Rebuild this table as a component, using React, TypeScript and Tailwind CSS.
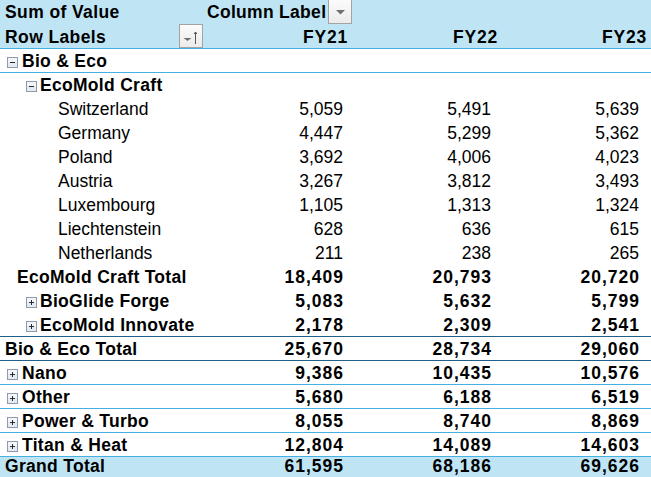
import React from "react";

type Row = {
  label: string;
  pl: string;
  icon?: "plus" | "minus";
  iconGap?: string;
  bold: boolean;
  vals?: [string, string, string];
  line?: "light" | "dark";
};

const rows: Row[] = [
  { label: "Bio & Eco", pl: "pl-[7px]", icon: "minus", iconGap: "mr-[4px]", bold: true, line: "light" },
  { label: "EcoMold Craft", pl: "pl-[26px]", icon: "minus", iconGap: "mr-[3px]", bold: true, line: "light" },
  { label: "Switzerland", pl: "pl-[58px]", bold: false, vals: ["5,059", "5,491", "5,639"] },
  { label: "Germany", pl: "pl-[58px]", bold: false, vals: ["4,447", "5,299", "5,362"] },
  { label: "Poland", pl: "pl-[58px]", bold: false, vals: ["3,692", "4,006", "4,023"] },
  { label: "Austria", pl: "pl-[58px]", bold: false, vals: ["3,267", "3,812", "3,493"] },
  { label: "Luxembourg", pl: "pl-[58px]", bold: false, vals: ["1,105", "1,313", "1,324"] },
  { label: "Liechtenstein", pl: "pl-[58px]", bold: false, vals: ["628", "636", "615"] },
  { label: "Netherlands", pl: "pl-[58px]", bold: false, vals: ["211", "238", "265"] },
  { label: "EcoMold Craft Total", pl: "pl-[17px]", bold: true, vals: ["18,409", "20,793", "20,720"] },
  { label: "BioGlide Forge", pl: "pl-[26px]", icon: "plus", iconGap: "mr-[3px]", bold: true, vals: ["5,083", "5,632", "5,799"] },
  { label: "EcoMold Innovate", pl: "pl-[26px]", icon: "plus", iconGap: "mr-[3px]", bold: true, vals: ["2,178", "2,309", "2,541"] },
  { label: "Bio & Eco Total", pl: "pl-[5px]", bold: true, vals: ["25,670", "28,734", "29,060"], line: "dark" },
  { label: "Nano", pl: "pl-[7px]", icon: "plus", iconGap: "mr-[4px]", bold: true, vals: ["9,386", "10,435", "10,576"], line: "dark" },
  { label: "Other", pl: "pl-[7px]", icon: "plus", iconGap: "mr-[4px]", bold: true, vals: ["5,680", "6,188", "6,519"], line: "light" },
  { label: "Power & Turbo", pl: "pl-[7px]", icon: "plus", iconGap: "mr-[4px]", bold: true, vals: ["8,055", "8,740", "8,869"], line: "light" },
  { label: "Titan & Heat", pl: "pl-[7px]", icon: "plus", iconGap: "mr-[4px]", bold: true, vals: ["12,804", "14,089", "14,603"], line: "light" },
];

function ToggleIcon({ kind, gap }: { kind: "plus" | "minus"; gap: string }) {
  return (
    <svg width="11" height="11" viewBox="0 0 11 11" className={`mt-[8px] shrink-0 ${gap}`}>
      <rect x="0.5" y="0.5" width="10" height="10" fill="#e6ebf2" stroke="#8d9bb1" />
      <rect x="1" y="1" width="9" height="4" fill="#f3f5f9" />
      <path d="M3 5.5h5" stroke="#2a2a2a" strokeWidth="1" />
      {kind === "plus" && <path d="M5.5 3v5" stroke="#2a2a2a" strokeWidth="1" />}
    </svg>
  );
}

function ValueCells({ vals, bold }: { vals?: [string, string, string]; bold: boolean }) {
  if (bold) {
    return (
      <>
        <div className="w-[149px] shrink-0 text-right pr-[8px] font-bold tracking-[1px]">{vals ? vals[0] : ""}</div>
        <div className="w-[148px] shrink-0 text-right pr-[8px] font-bold tracking-[1px]">{vals ? vals[1] : ""}</div>
        <div className="w-[151px] shrink-0 text-right pr-[11px] font-bold tracking-[1px]">{vals ? vals[2] : ""}</div>
      </>
    );
  }
  return (
    <>
      <div className="w-[149px] shrink-0 text-right pr-[9px]">{vals ? vals[0] : ""}</div>
      <div className="w-[148px] shrink-0 text-right pr-[9px]">{vals ? vals[1] : ""}</div>
      <div className="w-[151px] shrink-0 text-right pr-[12px]">{vals ? vals[2] : ""}</div>
    </>
  );
}

export default function App() {
  return (
    <div className="w-[651px] h-[477px] overflow-hidden bg-white text-black font-['Liberation_Sans',Arial,sans-serif] text-[17.5px]">
      {/* Header row 0 */}
      <div className="flex h-[24px] bg-[#bfe5f5] leading-[24px]">
        <div className="w-[203px] shrink-0 pl-[5px] font-bold tracking-[0.4px]">Sum of Value</div>
        <div className="w-[149px] shrink-0 flex items-start">
          <span className="pl-[4px] font-bold tracking-[0.3px] whitespace-nowrap">Column Label</span>
          <span className="ml-auto shrink-0 w-[24px] h-[24px] border-x border-b border-[#a3a3a3] bg-gradient-to-b from-[#fbfbfb] to-[#ebebeb] flex justify-center">
            <svg width="9" height="5" viewBox="0 0 9 5" className="mt-[10px]">
              <path d="M0 0h9L4.5 4.5z" fill="#6e6e6e" />
            </svg>
          </span>
        </div>
        <div className="w-[148px] shrink-0" />
        <div className="w-[151px] shrink-0" />
      </div>
      {/* Header row 1 */}
      <div className="flex h-[24px] bg-[#bfe5f5] leading-[24px] font-bold">
        <div className="w-[203px] shrink-0 flex items-start">
          <span className="pl-[5px] pt-px tracking-[0.4px]">Row Labels</span>
          <span className="ml-auto w-[24px] h-[24px] border border-[#a3a3a3] bg-gradient-to-b from-[#fbfbfb] to-[#ebebeb] relative">
            <svg width="22" height="22" viewBox="0 0 22 22" className="absolute left-0 top-0">
              <path d="M3.5 13h8l-4 3z" fill="#6e6e6e" />
              <path d="M15.5 7v12" stroke="#555" strokeWidth="1" />
              <path d="M14 9l1.5-2 1.5 2" stroke="#555" strokeWidth="1" fill="none" />
            </svg>
          </span>
        </div>
        <div className="w-[149px] shrink-0 text-right pr-[4px] pt-px tracking-[0.8px]">FY21</div>
        <div className="w-[148px] shrink-0 text-right pr-[2px] pt-px tracking-[0.8px]">FY22</div>
        <div className="w-[151px] shrink-0 text-right pr-[4px] pt-px tracking-[0.8px]">FY23</div>
      </div>
      {rows.map((r, i) => (
        <div
          key={i}
          className={`flex h-[24px] leading-[24px] pt-px ${
            r.line === "light"
              ? "shadow-[inset_0_1px_0_#45b0e1]"
              : r.line === "dark"
              ? "shadow-[inset_0_1px_0_#1f5f8a]"
              : ""
          }`}
        >
          <div
            className={`w-[203px] shrink-0 flex items-start whitespace-nowrap ${r.pl} ${
              r.bold ? "font-bold tracking-[0.3px]" : ""
            }`}
          >
            {r.icon && <ToggleIcon kind={r.icon} gap={r.iconGap ?? ""} />}
            <span>{r.label}</span>
          </div>
          <ValueCells vals={r.vals} bold={r.bold} />
        </div>
      ))}
      {/* Grand total */}
      <div className="flex h-[21px] leading-[20px] bg-[#bfe5f5] shadow-[inset_0_1px_0_#45b0e1]">
        <div className="w-[203px] shrink-0 pl-[5px] font-bold tracking-[0.3px]">Grand Total</div>
        <ValueCells vals={["61,595", "68,186", "69,626"]} bold={true} />
      </div>
    </div>
  );
}
